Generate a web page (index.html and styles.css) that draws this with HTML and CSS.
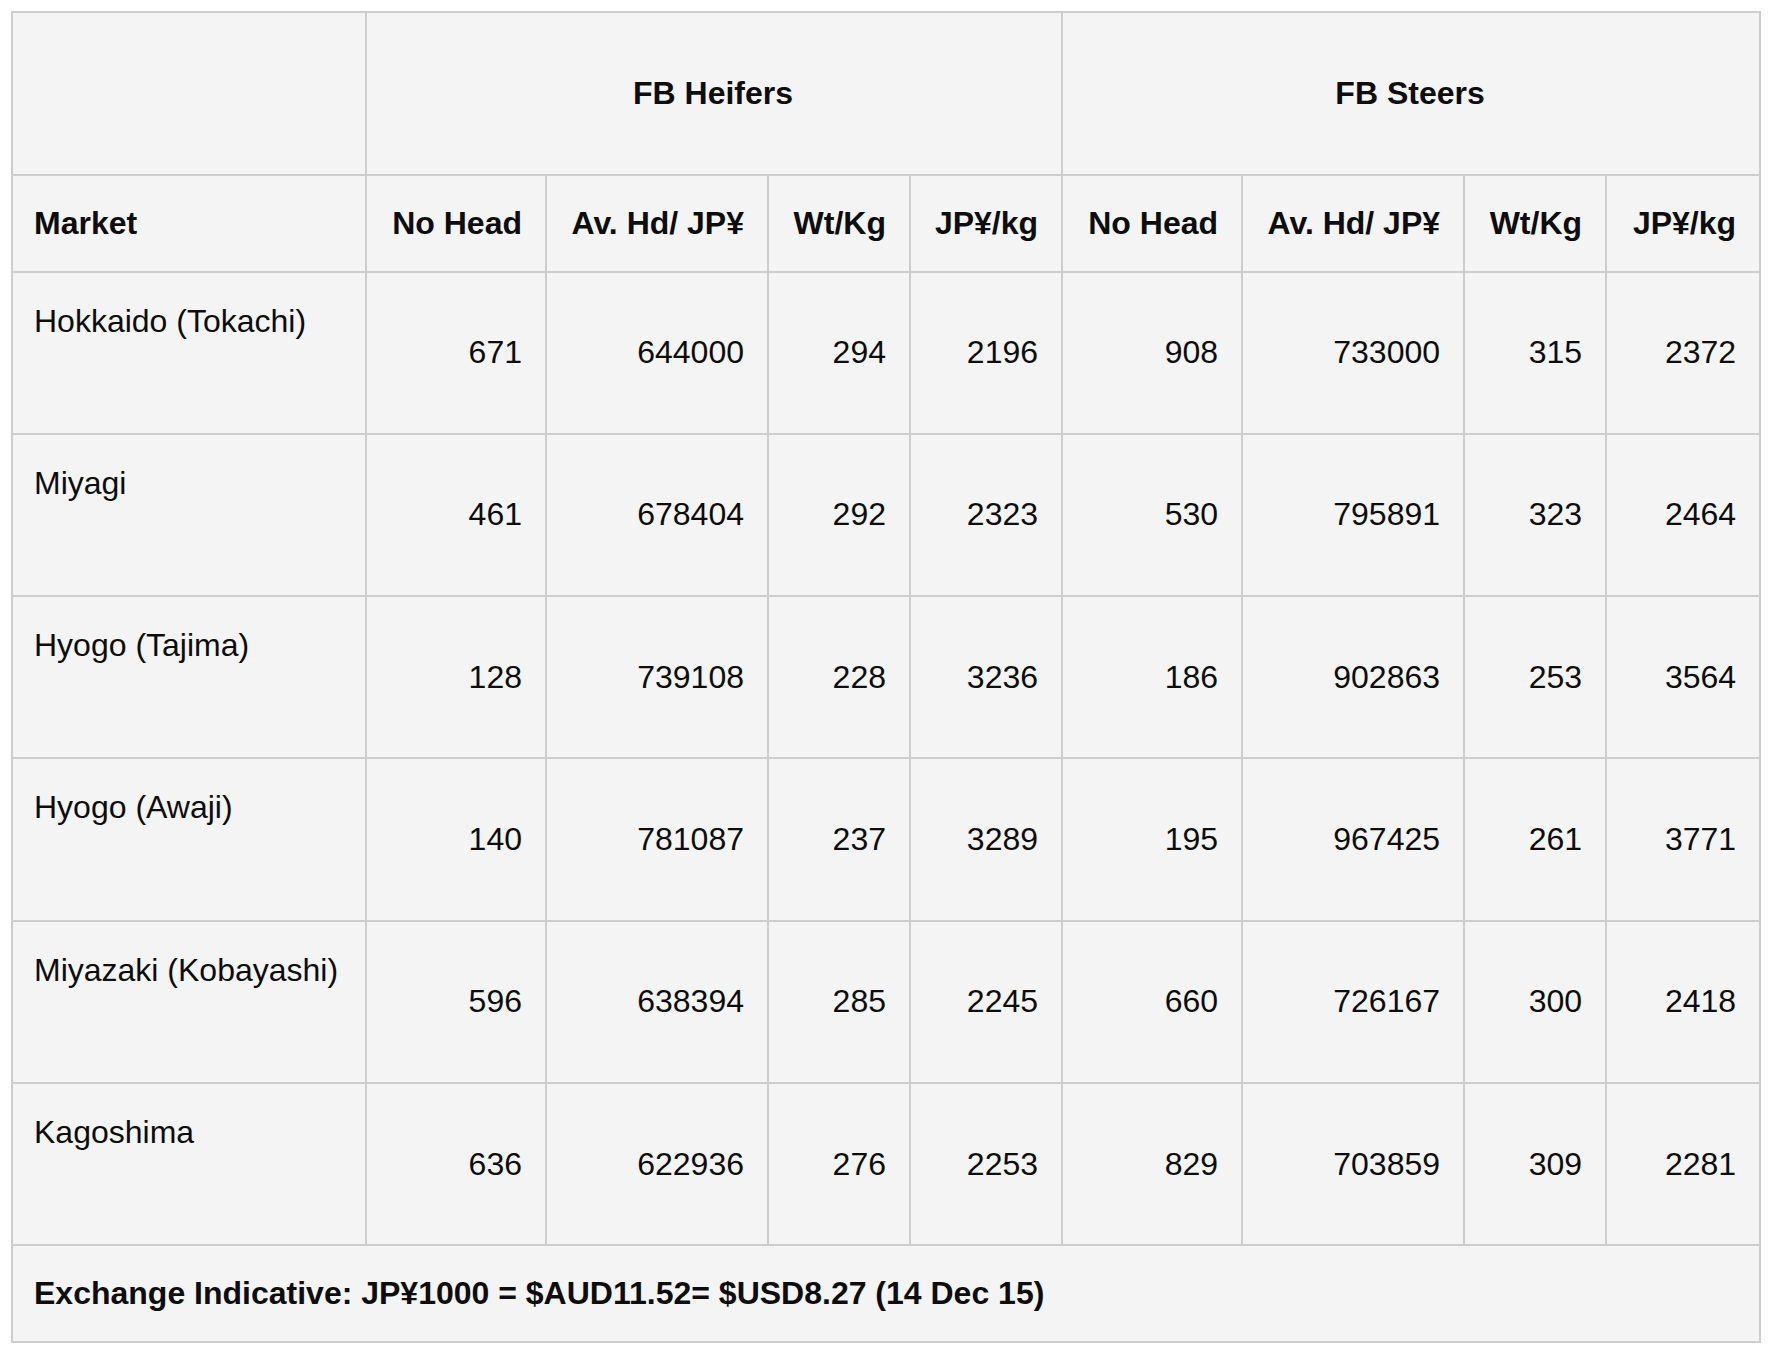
FILE: index.html
```html
<!DOCTYPE html>
<html lang="en">
<head>
<meta charset="utf-8">
<title>FB Heifers and Steers</title>
<link rel="stylesheet" href="styles.css">
</head>
<body>
<table class="market-table">
  <colgroup>
    <col class="c-market">
    <col class="c-head">
    <col class="c-av">
    <col class="c-wt">
    <col class="c-kg">
    <col class="c-head">
    <col class="c-av">
    <col class="c-wt">
    <col class="c-kg2">
  </colgroup>
  <thead>
    <tr class="group-row">
      <th></th>
      <th colspan="4" class="group">FB Heifers</th>
      <th colspan="4" class="group">FB Steers</th>
    </tr>
    <tr class="label-row">
      <th class="left">Market</th>
      <th>No Head</th>
      <th>Av. Hd/ JP¥</th>
      <th>Wt/Kg</th>
      <th>JP¥/kg</th>
      <th>No Head</th>
      <th>Av. Hd/ JP¥</th>
      <th>Wt/Kg</th>
      <th>JP¥/kg</th>
    </tr>
  </thead>
  <tbody>
    <tr class="data-row">
      <td class="market">Hokkaido (Tokachi)</td>
      <td>671</td><td>644000</td><td>294</td><td>2196</td>
      <td>908</td><td>733000</td><td>315</td><td>2372</td>
    </tr>
    <tr class="data-row">
      <td class="market">Miyagi</td>
      <td>461</td><td>678404</td><td>292</td><td>2323</td>
      <td>530</td><td>795891</td><td>323</td><td>2464</td>
    </tr>
    <tr class="data-row">
      <td class="market">Hyogo (Tajima)</td>
      <td>128</td><td>739108</td><td>228</td><td>3236</td>
      <td>186</td><td>902863</td><td>253</td><td>3564</td>
    </tr>
    <tr class="data-row">
      <td class="market">Hyogo (Awaji)</td>
      <td>140</td><td>781087</td><td>237</td><td>3289</td>
      <td>195</td><td>967425</td><td>261</td><td>3771</td>
    </tr>
    <tr class="data-row">
      <td class="market">Miyazaki (Kobayashi)</td>
      <td>596</td><td>638394</td><td>285</td><td>2245</td>
      <td>660</td><td>726167</td><td>300</td><td>2418</td>
    </tr>
    <tr class="data-row">
      <td class="market">Kagoshima</td>
      <td>636</td><td>622936</td><td>276</td><td>2253</td>
      <td>829</td><td>703859</td><td>309</td><td>2281</td>
    </tr>
    <tr class="foot-row">
      <td colspan="9" class="foot">Exchange Indicative: JP¥1000 = $AUD11.52= $USD8.27 (14 Dec 15)</td>
    </tr>
  </tbody>
</table>
</body>
</html>
```

FILE: styles.css
```css
html, body {
  background: #ffffff;
}
body {
  margin: 11px 0 0 11px;
  font-family: "Liberation Sans", Arial, Helvetica, sans-serif;
  font-size: 32px;
  color: #0d0d0d;
}
.market-table {
  border-collapse: collapse;
  table-layout: fixed;
  width: 1748px;
  background: #f4f4f4;
}
.c-market { width: 354px; }
.c-head { width: 180px; }
.c-av { width: 222px; }
.c-wt { width: 142px; }
.c-kg { width: 152px; }
.c-kg2 { width: 154px; }

.market-table th,
.market-table td {
  border: 2px solid #cdcdcd;
  padding: 0 23px 0 21px;
  text-align: right;
  vertical-align: middle;
  line-height: 37px;
  white-space: nowrap;
}
.market-table th {
  font-weight: bold;
}
.market-table .group {
  text-align: center;
}
.market-table .left,
.market-table .market,
.market-table .foot {
  text-align: left;
}
.group-row { height: 162.5px; }
.label-row { height: 97px; }
.data-row { height: 162.3px; }
.foot-row { height: 97px; }

.market-table td.market {
  vertical-align: top;
  padding-top: 30px;
}
.market-table td.foot {
  font-weight: bold;
}
```
